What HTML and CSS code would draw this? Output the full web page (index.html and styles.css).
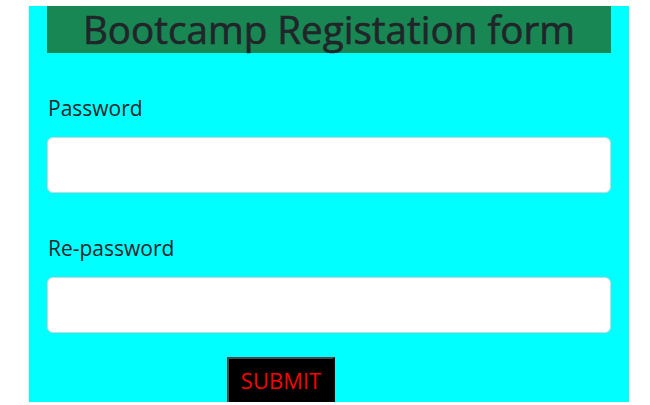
FILE: index.html
```html
<!DOCTYPE html>
<html lang="en">
<head>
<meta charset="utf-8">
<title>Bootcamp Registation form</title>
<link rel="stylesheet" href="styles.css">
</head>
<body>
<div class="page">
  <h1 class="title">Bootcamp Registation form</h1>
  <form class="form">
    <div class="group">
      <label class="label" for="pw">Password</label>
      <input class="input" id="pw" type="password">
    </div>
    <div class="group">
      <label class="label" for="rpw">Re-password</label>
      <input class="input" id="rpw" type="password">
    </div>
    <div class="actions">
      <button class="submit" type="button">SUBMIT</button>
    </div>
  </form>
</div>
</body>
</html>
```
FILE: styles.css
```css
html, body {
  margin: 0;
  padding: 0;
  background: #ffffff;
}
body {
  font-family: "Open Sans", "Noto Sans", sans-serif;
  color: #212529;
}
.page {
  box-sizing: border-box;
  margin: 6px 0 0 29px;
  width: 600px;
  height: 396px;
  padding: 0 18px;
  background: #00ffff;
  overflow: hidden;
}
.title {
  margin: 0;
  background: #198754;
  color: #212529;
  font-size: 38.6px;
  font-weight: 400;
  -webkit-text-stroke: 0.6px #212529;
  line-height: 47px;
  text-align: center;
}
.form {
  margin: 0;
}
.group {
  margin-top: 40px;
}
.label {
  display: block;
  font-size: 21px;
  line-height: 31.5px;
  margin-bottom: 12.5px;
  padding-left: 1px;
}
.input {
  display: block;
  box-sizing: border-box;
  width: 100%;
  height: 56px;
  margin: 0;
  border: 1px solid #ced4da;
  border-radius: 6px;
  background: #fff;
}
.actions {
  margin-top: 24px;
  padding-left: 180px;
}
.submit {
  font-family: "Open Sans", "Noto Sans", sans-serif;
  font-size: 22px;
  line-height: 33px;
  color: #ff0000;
  background: #000;
  border-style: solid;
  border-width: 2px;
  border-color: #4a4a4a #000 #000 #4a4a4a;
  padding: 5px 11px;
  width: 108px;
}
```
